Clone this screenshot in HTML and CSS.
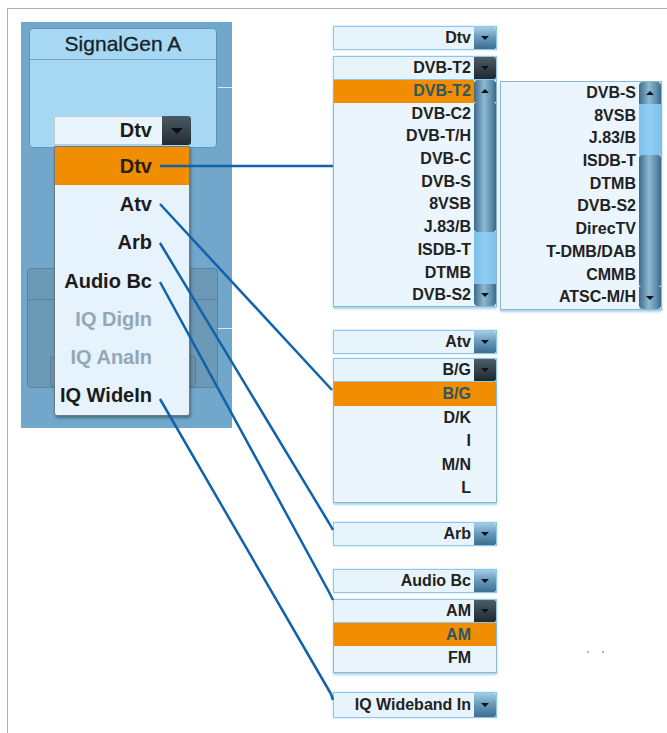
FILE: index.html
```html
<!DOCTYPE html>
<html>
<head>
    <title>SignalGen A - Standard Menus</title>
    <link rel="stylesheet" href="styles.css">
</head>
<body>
<div class="frame">
    <div class="panel">
        <div class="card">
            <div class="card-title">SignalGen A</div>
            <div class="card-body">
                <div class="big-select">
                    <span class="big-value">Dtv</span>
                    <span class="big-btn"><i class="tri-down"></i></span>
                    <ul class="big-menu">
                        <li class="sel">Dtv</li>
                        <li>Atv</li>
                        <li>Arb</li>
                        <li>Audio Bc</li>
                        <li class="off">IQ DigIn</li>
                        <li class="off">IQ AnaIn</li>
                        <li>IQ WideIn</li>
                    </ul>
                </div>
            </div>
        </div>
        <div class="card card-dim">
            <div class="card-title"></div>
            <div class="card-body">
                <div class="dim-select"></div>
            </div>
        </div>
    </div>

    <div class="col col-main">
        <div class="dd"><span class="dd-value">Dtv</span><span class="dd-btn"><i class="tri-down"></i></span></div>
        <div class="dd dd-open gap-s"><span class="dd-value">DVB-T2</span><span class="dd-btn"><i class="tri-down"></i></span></div>
        <div class="list scroll-list">
            <ul class="rows">
                <li class="sel">DVB-T2</li>
                <li>DVB-C2</li>
                <li>DVB-T/H</li>
                <li>DVB-C</li>
                <li>DVB-S</li>
                <li>8VSB</li>
                <li>J.83/B</li>
                <li>ISDB-T</li>
                <li>DTMB</li>
                <li>DVB-S2</li>
            </ul>
            <div class="scrollbar">
                <span class="sb-end sb-up"><i class="tri-up"></i></span>
                <span class="sb-dark sb-thumb-a"></span>
                <span class="sb-light sb-fill"></span>
                <span class="sb-end sb-down"><i class="tri-down"></i></span>
            </div>
        </div>

        <div class="dd gap-atv"><span class="dd-value">Atv</span><span class="dd-btn"><i class="tri-down"></i></span></div>
        <div class="dd dd-open gap-xs"><span class="dd-value">B/G</span><span class="dd-btn"><i class="tri-down"></i></span></div>
        <div class="list tall-rows">
            <ul class="rows">
                <li class="sel">B/G</li>
                <li>D/K</li>
                <li>I</li>
                <li>M/N</li>
                <li>L</li>
            </ul>
        </div>

        <div class="dd gap-arb"><span class="dd-value">Arb</span><span class="dd-btn"><i class="tri-down"></i></span></div>

        <div class="dd gap-audio"><span class="dd-value">Audio Bc</span><span class="dd-btn"><i class="tri-down"></i></span></div>
        <div class="dd dd-open gap-s"><span class="dd-value">AM</span><span class="dd-btn"><i class="tri-down"></i></span></div>
        <div class="list tall-rows">
            <ul class="rows">
                <li class="sel">AM</li>
                <li>FM</li>
            </ul>
        </div>

        <div class="dd dd-tall gap-iq"><span class="dd-value">IQ Wideband In</span><span class="dd-btn"><i class="tri-down"></i></span></div>
    </div>

    <div class="col col-sub">
        <div class="list scroll-list boxed">
            <ul class="rows">
                <li>DVB-S</li>
                <li>8VSB</li>
                <li>J.83/B</li>
                <li>ISDB-T</li>
                <li>DTMB</li>
                <li>DVB-S2</li>
                <li>DirecTV</li>
                <li>T-DMB/DAB</li>
                <li>CMMB</li>
                <li>ATSC-M/H</li>
            </ul>
            <div class="scrollbar">
                <span class="sb-end sb-up"><i class="tri-up"></i></span>
                <span class="sb-light sb-thumb-b"></span>
                <span class="sb-dark sb-fill"></span>
                <span class="sb-end sb-down"><i class="tri-down"></i></span>
            </div>
        </div>
    </div>

    <svg class="wires" width="667" height="733" viewBox="0 0 667 733">
        <path d="M160 166 H333"/>
        <path d="M160 204 L332 390"/>
        <path d="M160 243 L329 523 L333 530"/>
        <path d="M160 282 L329 592 L333 600"/>
        <path d="M160 399 L331 694 L333 700"/>
    </svg>
    <span class="speck speck-a"></span>
    <span class="speck speck-b"></span>
</div>
</body>
</html>
```

FILE: styles.css
```css
html, body {
    margin: 0;
    padding: 0;
    background: #fff;
    overflow: hidden;
}

body {
    font-family: "Liberation Sans", Arial, sans-serif;
    color: #222;
}

ul {
    list-style: none;
    margin: 0;
    padding: 0;
}

.frame {
    position: relative;
    display: flex;
    align-items: flex-start;
    box-sizing: border-box;
    width: 660px;
    height: 725px;
    margin: 8px 0 0 7px;
    border-top: 1px solid #aab2ba;
    border-left: 1px solid #aab2ba;
}

/* left device panel */

.panel {
    position: relative;
    box-sizing: border-box;
    width: 211px;
    height: 406px;
    margin: 13px 0 0 13px;
    padding-top: 6px;
    background: #70a7ca;
}

.panel::before,
.panel::after {
    content: "";
    position: absolute;
    left: 197px;
    width: 14px;
    height: 1px;
    background: #d6eaf6;
}

.panel::before {
    top: 65px;
}

.panel::after {
    top: 306px;
}

.card {
    box-sizing: border-box;
    width: 188px;
    height: 120px;
    margin-left: 8px;
    background: #a6d8f4;
    border: 1px solid #5f95b8;
    border-radius: 4px;
}

.card-title {
    height: 30px;
    border-bottom: 1px solid #6b9fc1;
    text-align: center;
    font-size: 21px;
    line-height: 29px;
    color: #182228;
    -webkit-text-stroke: 0.3px #182228;
}

.card-dim {
    width: 191px;
    margin: 120px 0 0 6px;
    background: #6b99b6;
    border-color: #56839f;
}

.card-dim .card-title {
    border-bottom-color: #56839f;
}

.dim-select {
    width: 144px;
    height: 29px;
    margin: 56px 0 0 22px;
    background: #6994ae;
    border: 1px solid #537d97;
    border-radius: 3px;
}

.big-select {
    position: relative;
    display: flex;
    width: 137px;
    height: 29px;
    margin: 56px 0 0 24px;
}

.big-value {
    flex: 1;
    box-sizing: border-box;
    padding-right: 10px;
    background: #eaf4fc;
    border: 1px solid #b9ccd8;
    border-right: none;
    border-radius: 2px 0 0 2px;
    text-align: right;
    font-size: 20px;
    font-weight: bold;
    line-height: 27px;
    color: #1b1b1b;
}

.big-btn {
    display: flex;
    align-items: center;
    justify-content: center;
    width: 29px;
    background: linear-gradient(#4b5a63, #202c33);
    border-radius: 0 3px 3px 0;
}

.big-btn .tri-down {
    border-width: 6px 6px 0;
    border-top-color: #0c0f11;
}

.big-menu {
    position: absolute;
    z-index: 1;
    top: 30px;
    left: 0;
    box-sizing: border-box;
    width: 136px;
    background: #e6f2fc;
    border: 1px solid #6f7b83;
    border-radius: 0 0 3px 3px;
    box-shadow: 1px 2px 3px rgba(0, 0, 0, 0.35);
}

.big-menu li {
    display: flex;
    align-items: center;
    justify-content: flex-end;
    height: 38.3px;
    padding-right: 37px;
    font-size: 20px;
    font-weight: bold;
    color: #1b1b1b;
}

.big-menu li.sel {
    background: #f18d00;
    color: #2a2010;
}

.big-menu li.off {
    color: #93a7b6;
}

/* right hand menus */

.col-main {
    width: 164px;
    margin: 17px 0 0 101px;
}

.col-sub {
    width: 162px;
    margin: 72px 0 0 3px;
}

.gap-xs { margin-top: 4px; }
.gap-s { margin-top: 6px; }
.gap-atv { margin-top: 23px; }
.gap-arb { margin-top: 19px; }
.gap-audio { margin-top: 23px; }
.gap-iq { margin-top: 19px; }

.dd {
    display: flex;
    box-sizing: border-box;
    height: 24px;
    background: #e8f4fc;
    border: 1px solid #8fc5e8;
    box-shadow: 0 0 2px #b6dcf3;
}

.dd-tall {
    height: 26px;
}

.dd-value {
    flex: 1;
    padding-right: 3px;
    text-align: right;
    font-size: 16px;
    font-weight: bold;
    line-height: 22px;
    color: #222;
}

.dd-tall .dd-value {
    line-height: 24px;
}

.dd-btn {
    display: flex;
    align-items: center;
    justify-content: center;
    width: 22px;
    background: linear-gradient(#a2cde6, #6a9cbe 45%, #3d6d90);
    border-radius: 0 2px 2px 0;
}

.dd-open .dd-btn {
    background: linear-gradient(#4d5c66, #1d2930);
}

.tri-down,
.tri-up {
    display: block;
    width: 0;
    height: 0;
    border-style: solid;
    border-color: transparent;
}

.tri-down {
    border-width: 4px 4px 0;
    border-top-color: #111;
}

.tri-up {
    border-width: 0 4px 4px;
    border-bottom-color: #111;
}

.list {
    box-sizing: border-box;
    background: #eaf5fd;
    border: 1px solid #8db6d0;
    border-top: none;
    box-shadow: 0 2px 2px #a8d4ee;
}

.list.boxed {
    border-top: 1px solid #8db6d0;
}

.rows {
    flex: 1;
}

.rows li {
    height: 22.7px;
    padding-right: 3px;
    text-align: right;
    font-size: 16px;
    font-weight: bold;
    line-height: 22.7px;
    color: #222;
}

.rows li.sel {
    background: #f28c00;
    color: #2b5864;
}

.tall-rows {
    padding-bottom: 2px;
}

.tall-rows .rows li {
    height: 23.5px;
    padding-right: 25px;
    line-height: 23.5px;
}

.scroll-list {
    display: flex;
    height: 227px;
}

.col-sub .scroll-list {
    height: 229px;
}

.scrollbar {
    display: flex;
    flex-direction: column;
    width: 22px;
}

.sb-end,
.sb-dark {
    background: linear-gradient(to right, #3d6b8b, #8db8d1 45%, #5d8dac 80%, #3b6888);
}

.sb-end {
    display: flex;
    align-items: center;
    justify-content: center;
    height: 22px;
}

.sb-up {
    border-radius: 4px 4px 0 0;
}

.sb-down {
    border-radius: 0 0 4px 4px;
}

.sb-light {
    background: linear-gradient(to right, #7fc0ea, #8fcdf3 50%, #7fc0ea);
}

.sb-thumb-a {
    height: 130px;
    border-radius: 3px;
}

.sb-thumb-b {
    height: 51px;
}

.sb-fill {
    flex: 1;
}

.col-sub .sb-fill {
    border-radius: 3px;
}

/* connectors */

.wires {
    position: absolute;
    z-index: 2;
    left: -8px;
    top: -9px;
    fill: none;
    stroke: #1062aa;
    stroke-width: 2.5;
    stroke-linejoin: round;
}

.speck {
    position: absolute;
    top: 642px;
    width: 2px;
    height: 2px;
    background: #b4b4b4;
}

.speck-a { left: 579px; }
.speck-b { left: 594px; }
```
